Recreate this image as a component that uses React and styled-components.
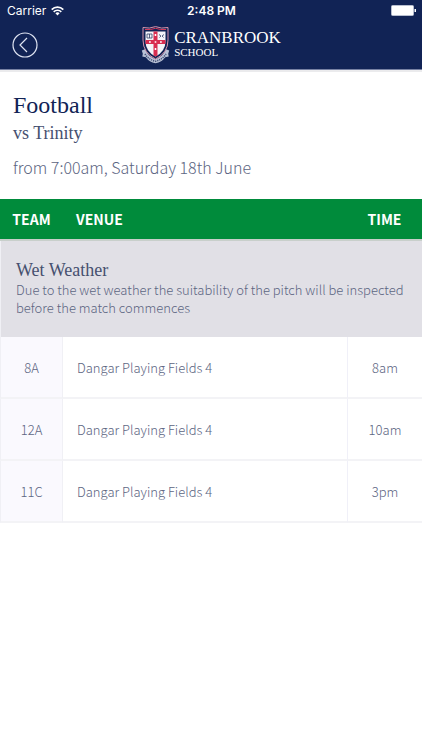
import React from "react";
import styled, { createGlobalStyle } from "styled-components";

const sans = `"Noto Sans CJK SC", "Open Sans", sans-serif`;
const serif = `"Liberation Serif", serif`;

const matches = [
  { team: "8A", venue: "Dangar Playing Fields 4", time: "8am" },
  { team: "12A", venue: "Dangar Playing Fields 4", time: "10am" },
  { team: "11C", venue: "Dangar Playing Fields 4", time: "3pm" },
];

const GlobalStyle = createGlobalStyle`
  * {
    box-sizing: border-box;
  }

  body {
    margin: 0;
    background-color: #fff;
    font-family: ${sans};
    font-weight: 300;
    color: #5c6582;
  }

  h1, h2, h3, p {
    margin: 0;
    font-weight: 400;
  }
`;

const Header = styled.header`
  background-color: #112355;
  color: #fff;
  border-bottom: 1px solid #7781a3;
  box-shadow: 0 2px 0 #ebebed;
`;

const StatusBar = styled.div`
  display: grid;
  grid-template-columns: 1fr auto 1fr;
  align-items: center;
  height: 21px;
  padding: 0 6px 0 7px;
  font-family: Inter, sans-serif;
  font-size: 12px;
  font-weight: 400;
`;

const Carrier = styled.span`
  display: flex;
  align-items: center;
  gap: 5px;
`;

const Clock = styled.span`
  font-weight: 600;
`;

const Battery = styled.svg`
  justify-self: end;
`;

const NavBar = styled.nav`
  display: grid;
  grid-template-columns: 1fr auto 1fr;
  align-items: center;
  height: 48px;
  padding: 0 12px;
`;

const BackButton = styled.button`
  display: flex;
  width: 26px;
  height: 26px;
  padding: 0;
  border: none;
  background: none;
  cursor: pointer;
`;

const Brand = styled.a`
  display: flex;
  gap: 4px;
  color: #fff;
  text-decoration: none;
  font-family: ${serif};
`;

const BrandText = styled.span`
  display: flex;
  flex-direction: column;
  padding-top: 2px;
`;

const BrandName = styled.span`
  font-size: 17px;
  line-height: 20px;
`;

const BrandSub = styled.span`
  font-size: 11px;
  line-height: 8px;
`;

const Intro = styled.section`
  padding: 20px 13px 19px;
`;

const Sport = styled.h1`
  font-family: ${serif};
  font-size: 24px;
  line-height: 30px;
  color: #112355;
`;

const Opponent = styled.h2`
  font-family: ${serif};
  font-size: 18px;
  line-height: 26px;
  color: #46506f;
`;

const Kickoff = styled.p`
  margin-top: 8px;
  font-size: 16px;
  line-height: 26px;
  && {
    font-weight: 300;
  }
`;

const Fixtures = styled.table`
  width: 100%;
  border-collapse: separate;
  border-spacing: 0;
  table-layout: fixed;
  font-size: 13px;
  line-height: 18px;
`;

const HeadRow = styled.tr`
  background-color: #008b3b;
  color: #fff;
  font-size: 14px;
`;

const Heading = styled.th`
  width: ${(props) => props.$width || "auto"};
  height: 42px;
  padding: 0 ${(props) => (props.$width ? "0" : "13px")};
  border-bottom: 2px solid #c8cfcb;
  font-weight: 700;
  text-align: ${(props) => (props.$width ? "center" : "left")};
`;

const Notice = styled.td`
  height: 96px;
  padding: 18px 15px 20px;
  background-color: #e1e0e6;
  border-left: 1px solid #f0f0f5;
`;

const NoticeTitle = styled.h3`
  font-family: ${serif};
  font-size: 18px;
  line-height: 22px;
  color: #46506f;
`;

const Cell = styled.td`
  height: 62px;
  padding: 2px 14px 0;
  border-bottom: 2px solid #f3f3f6;
`;

const TeamCell = styled(Cell)`
  padding: 2px 0 0;
  background-color: #faf9fe;
  border-left: 1px solid #f0f0f5;
  border-right: 1px solid #f0f0f5;
  text-align: center;
`;

const TimeCell = styled(Cell)`
  padding: 2px 0 0;
  border-left: 1px solid #f0f0f8;
  text-align: center;
`;

const WifiIcon = () => (
  <svg width="13" height="10" viewBox="0 0 13 10" aria-hidden="true">
    <g fill="none" stroke="#fff" strokeWidth="1.7">
      <path d="M.7 3.6a8.2 8.2 0 0 1 11.6 0" />
      <path d="M2.7 5.8a5.4 5.4 0 0 1 7.6 0" />
    </g>
    <path d="M6.5 9.4 4.4 7.3a3 3 0 0 1 4.2 0z" fill="#fff" />
  </svg>
);

const BackIcon = () => (
  <svg width="26" height="26" viewBox="0 0 26 26" fill="none" stroke="#dfe4f2" strokeWidth="1.2">
    <circle cx="13" cy="13" r="12" />
    <path d="M15 6 8 13l7 7" />
  </svg>
);

const Crest = () => (
  <svg width="29" height="38" viewBox="0 0 29 38" aria-hidden="true">
    <path d="M.8 24.5 4.5 23q1.5 7 10 10.2Q23 30 24.5 23l3.7 1.5-1 3.3.5 2.7-3.5.7q-3.5 5-9.7 6-6.2-1-9.7-6l-3.5-.7.5-2.7z" fill="#b9c1d6" />
    <path d="M4 28q3.5 5.5 10.5 7.3Q21.5 33.5 25 28" fill="none" stroke="#435078" strokeWidth="1.6" strokeDasharray="1.2 .9" />
    <path d="M2 1.5q6.5 1.6 12.5-.9 6 2.5 12.5.9V14q0 13-12.5 19Q2 27 2 14z" fill="#112355" stroke="#d894ab" strokeWidth="1" />
    <path d="M4.5 5.5h20V15q0 10.500-10 15.500-10-5-10-15.500z" fill="#f4f4f8" />
    <path d="M4 3.5q5.5.7 10.5-1.2 5 1.9 10.5 1.2" fill="none" stroke="#d7395c" strokeWidth="1" />
    <path d="M12.5 5.5h4V14h8v4h-8v11.5l-2 1-2-1V18h-8v-4h8z" fill="#d82d50" />
    <path d="M13.7 8h1.6v2h-1.6zM13.7 15.2h1.6v1.6h-1.6zM13.7 22h1.6v2h-1.6zM8 15.2h1.8v1.6H8zM19 15.2h1.8v1.6H19z" fill="#fff" />
    <path d="M6 8h5v4H6zM8.5 8v4M18 8.5l2 1.5-1.5 1.5M23 8.5 21 10l1.5 1.5" fill="none" stroke="#344267" strokeWidth=".8" />
  </svg>
);

const App = () => {
  return (
    <>
      <GlobalStyle />
      <Header>
        <StatusBar>
          <Carrier>
            Carrier
            <WifiIcon />
          </Carrier>
          <Clock>2:48 PM</Clock>
          <Battery width="25" height="11" viewBox="0 0 25 11" aria-hidden="true">
            <rect x=".5" y=".5" width="22" height="10" rx="1" fill="#fff" stroke="#b8bfd0" />
            <path d="M23.5 4H25v3h-1.5z" fill="#fff" />
          </Battery>
        </StatusBar>
        <NavBar>
          <BackButton type="button" aria-label="Back">
            <BackIcon />
          </BackButton>
          <Brand href="#">
            <Crest />
            <BrandText>
              <BrandName>CRANBROOK</BrandName>
              <BrandSub>SCHOOL</BrandSub>
            </BrandText>
          </Brand>
        </NavBar>
      </Header>
      <main>
        <Intro>
          <Sport>Football</Sport>
          <Opponent>vs Trinity</Opponent>
          <Kickoff>from 7:00am, Saturday 18th June</Kickoff>
        </Intro>
        <Fixtures>
          <thead>
            <HeadRow>
              <Heading scope="col" $width="63px">TEAM</Heading>
              <Heading scope="col">VENUE</Heading>
              <Heading scope="col" $width="75px">TIME</Heading>
            </HeadRow>
          </thead>
          <tbody>
            <tr>
              <Notice colSpan={3}>
                <NoticeTitle>Wet Weather</NoticeTitle>
                Due to the wet weather the suitability of the pitch will be inspected before the match commences
              </Notice>
            </tr>
            {matches.map((match) => (
              <tr key={match.team}>
                <TeamCell>{match.team}</TeamCell>
                <Cell>{match.venue}</Cell>
                <TimeCell>{match.time}</TimeCell>
              </tr>
            ))}
          </tbody>
        </Fixtures>
      </main>
    </>
  );
};

export default App;
